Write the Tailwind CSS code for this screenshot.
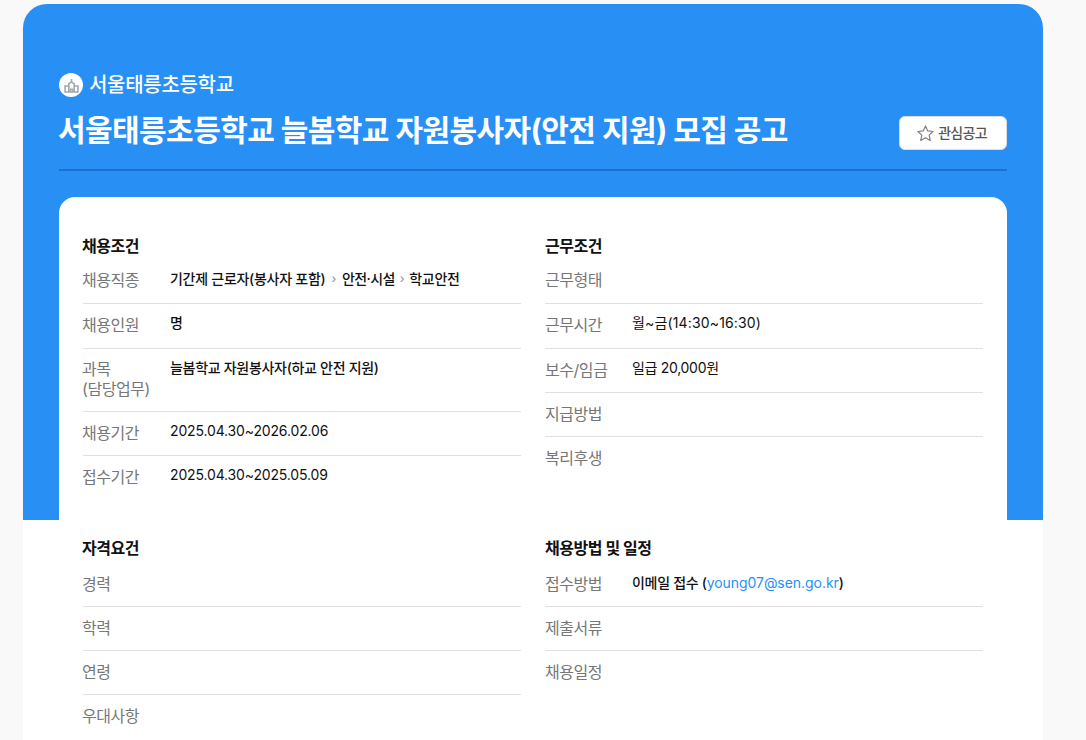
<!DOCTYPE html>
<html lang="ko">

<head>
    <meta charset="UTF-8">
    <meta name="viewport" content="width=device-width, initial-scale=1.0">
    <title>모집 공고</title>
    <script src="https://cdn.jsdelivr.net/npm/@tailwindcss/browser@4"></script>
</head>

<body class="bg-[#f9f9f9] font-['Inter','Noto_Sans_CJK_KR',sans-serif] h-[740px] overflow-hidden">
    <div class="ml-[23px] mt-[4px] w-[1020px] h-[736px] overflow-hidden rounded-t-[24px] bg-[linear-gradient(#288ff5_516px,#ffffff_516px)] px-9">
        <!-- header -->
        <div class="pt-[67px] border-b-2 border-[#1a72cf] h-[167px]">
            <div class="flex items-center gap-[6px] h-[28px]">
                <span class="flex w-6 h-6 items-center justify-center rounded-full bg-white">
                    <svg width="15" height="15" viewBox="0 0 14 14" fill="none" stroke="#a3a8ae" stroke-width="1.5">
                        <path d="M7 1V3.500M4.500 13V5.500L7 3.500l2.500 2V13M4.500 7.500H1v5.500h12V7.500H9.500" />
                        <path d="M6 13v-2.500h2V13" />
                    </svg>
                </span>
                <span class="text-[20px] font-medium text-white tracking-[-0.3px]">서울태릉초등학교</span>
            </div>
            <div class="mt-[9px] flex items-center justify-between">
                <h1 class="-ml-[1px] text-[30px] font-bold leading-[44px] text-white tracking-[-0.57px]">서울태릉초등학교 늘봄학교 자원봉사자(안전 지원) 모집 공고</h1>
                <button class="mt-[6px] pr-[3px] flex w-[108px] h-[34px] items-center justify-center gap-[3px] rounded-md border border-[#dddddd] bg-white text-[14px] font-medium text-[#555555] tracking-[-0.7px]">
                    <svg width="19" height="19" viewBox="0 0 24 24" fill="none" stroke="#808080" stroke-width="1.5" stroke-linejoin="round">
                        <path d="M12 2.500l2.900 6.200 6.700.8-5 4.600 1.400 6.700-6-3.400-6 3.400 1.400-6.700-5-4.600 6.700-.8z" />
                    </svg>
                    <span class="-mt-[2px]">관심공고</span>
                </button>
            </div>
        </div>

        <!-- conditions -->
        <div class="mt-[26px] rounded-t-2xl bg-white px-6 pt-[38px] grid grid-cols-2 gap-x-6 gap-y-[26px] text-[16px] text-[#777777] leading-[20px] tracking-[-0.45px]">
            <section class="h-[276px]">
                <h2 class="-ml-[1px] font-bold text-[#111111] leading-[22px] mb-[12px]">채용조건</h2>
                <div class="divide-y divide-[#e0e0e0]">
                    <div class="flex pb-[13px]">
                        <span class="-ml-[1px] w-[88px] shrink-0 pt-[1px]">채용직종</span>
                        <span class="flex items-center self-start gap-[6px] text-[14px] text-[#111111] font-medium leading-[19px] tracking-[-0.27px]">기간제 근로자(봉사자 포함) <i class="not-italic text-[#999999] text-[12px]">›</i> <span class="tracking-[-0.6px]">안전·시설</span> <i class="-mx-[1px] not-italic text-[#999999] text-[12px]">›</i> 학교안전</span>
                    </div>
                    <div class="flex pt-[11px] pb-[13px]">
                        <span class="-ml-[1px] w-[88px] shrink-0">채용인원</span>
                        <span class="-mt-[2px] text-[14px] text-[#111111] font-medium leading-[19px] tracking-[-0.3px]">명</span>
                    </div>
                    <div class="flex pt-[10px] pb-[12px]">
                        <span class="-ml-[1px] w-[88px] shrink-0">과목<br>(담당업무)</span>
                        <span class="-mt-[1px] text-[14px] text-[#111111] font-medium leading-[19px] tracking-[-0.3px]">늘봄학교 자원봉사자(하교 안전 지원)</span>
                    </div>
                    <div class="flex pt-[10.5px] pb-[12.5px]">
                        <span class="-ml-[1px] w-[88px] shrink-0">채용기간</span>
                        <span class="-mt-[2px] text-[14px] text-[#111111] leading-[19px] tracking-[-0.15px]">2025.04.30~2026.02.06</span>
                    </div>
                    <div class="flex pt-[10.5px] pb-[12.5px]">
                        <span class="-ml-[1px] w-[88px] shrink-0">접수기간</span>
                        <span class="-mt-[2px] text-[14px] text-[#111111] leading-[19px] tracking-[-0.15px]">2025.04.30~2025.05.09</span>
                    </div>
                </div>
            </section>
            <section class="h-[276px]">
                <h2 class="font-bold text-[#111111] leading-[22px] mb-[12px]">근무조건</h2>
                <div class="divide-y divide-[#e0e0e0]">
                    <div class="flex pb-[13px]">
                        <span class="w-[87px] shrink-0 pt-[1px]">근무형태</span>
                    </div>
                    <div class="flex pt-[11px] pb-[13px]">
                        <span class="w-[87px] shrink-0">근무시간</span>
                        <span class="-mt-[2px] text-[14px] text-[#111111] leading-[19px] tracking-[0.15px]">월~금(14:30~16:30)</span>
                    </div>
                    <div class="flex pt-[10.5px] pb-[12.5px]">
                        <span class="w-[87px] shrink-0">보수/임금</span>
                        <span class="-mt-[2px] text-[14px] text-[#111111] leading-[19px] tracking-[-0.3px]">일급 20,000원</span>
                    </div>
                    <div class="flex pt-[10.5px] pb-[12.5px]">
                        <span class="w-[87px] shrink-0">지급방법</span>
                    </div>
                    <div class="flex pt-[10.5px] pb-[12.5px]">
                        <span class="w-[87px] shrink-0">복리후생</span>
                    </div>
                </div>
            </section>
            <section>
                <h2 class="-ml-[1px] font-bold text-[#111111] leading-[22px] mb-[13px]">자격요건</h2>
                <div class="divide-y divide-[#e0e0e0]">
                    <div class="flex pt-[1px] pb-[12px]"><span class="-ml-[1px] pt-[1px]">경력</span></div>
                    <div class="flex pt-[10.5px] pb-[12.5px]"><span class="-ml-[1px]">학력</span></div>
                    <div class="flex pt-[10.5px] pb-[12.5px]"><span class="-ml-[1px]">연령</span></div>
                    <div class="flex pt-[10.5px] pb-[12.5px]"><span class="-ml-[1px]">우대사항</span></div>
                </div>
            </section>
            <section>
                <h2 class="font-bold text-[#111111] leading-[22px] mb-[13px]">채용방법 및 일정</h2>
                <div class="divide-y divide-[#e0e0e0]">
                    <div class="flex pt-[1px] pb-[12px]">
                        <span class="w-[87px] shrink-0 pt-[1px]">접수방법</span>
                        <span class="text-[14px] text-[#111111] font-medium leading-[19px] tracking-[-0.3px]">이메일 접수 (<a class="text-[#288ff5] font-normal tracking-[-0.05px]">young07@sen.go.kr</a>)</span>
                    </div>
                    <div class="flex pt-[10.5px] pb-[12.5px]"><span>제출서류</span></div>
                    <div class="flex pt-[10.5px] pb-[12.5px]"><span>채용일정</span></div>
                </div>
            </section>
        </div>
    </div>
</body>

</html>
